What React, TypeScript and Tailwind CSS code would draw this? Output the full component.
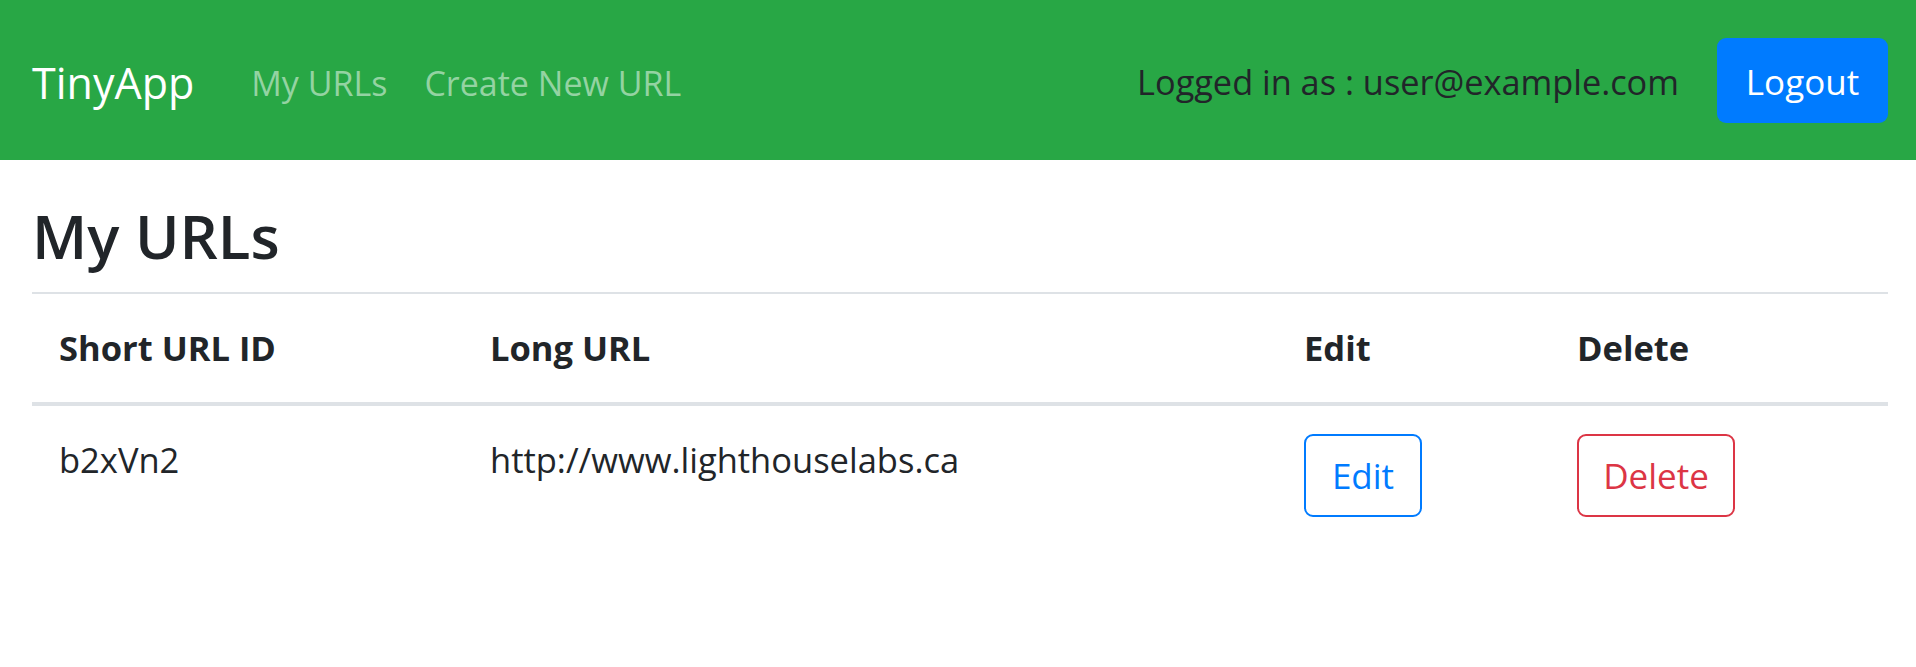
export default function App() {
  return (
    <div className="min-h-[667px] bg-white font-['Open_Sans',sans-serif] text-[#212529]">
      <nav className="flex h-[160px] items-center bg-[#28a745] pl-[32px] pr-[28px]">
        <span className="whitespace-nowrap pt-[4px] text-[43px] leading-none text-white">TinyApp</span>
        <div className="ml-[57px] flex gap-[37px] whitespace-nowrap pt-[5px] text-[34px] leading-none text-[#94d3a2]">
          <span>My URLs</span>
          <span>Create New URL</span>
        </div>
        <div className="ml-auto flex items-center gap-[38px]">
          <span className="whitespace-nowrap pt-[5px] text-[34.3px] leading-none text-[#212529]">Logged in as : user@example.com</span>
          <button className="flex h-[85px] w-[171px] items-center justify-center rounded-[9px] bg-[#007bff] pt-[3px] text-[35px] leading-none text-white">
            Logout
          </button>
        </div>
      </nav>
      <main className="pl-[32px] pr-[28px] pt-[38px]">
        <h1 className="mb-[17px] text-[60px] font-semibold leading-[77px]">My URLs</h1>
        <div className="grid grid-cols-[431px_814px_273px_338px] border-t-2 border-[#dee2e6] text-[34.5px] leading-[54px]">
          <div className="border-b-4 border-[#dee2e6] p-[27px] font-bold">Short URL ID</div>
          <div className="border-b-4 border-[#dee2e6] p-[27px] font-bold">Long URL</div>
          <div className="border-b-4 border-[#dee2e6] p-[27px] font-bold">Edit</div>
          <div className="border-b-4 border-[#dee2e6] p-[27px] font-bold">Delete</div>
          <div className="p-[27px]">b2xVn2</div>
          <div className="p-[27px]">http://www.lighthouselabs.ca</div>
          <div className="p-[27px]">
            <button className="mt-px flex h-[83px] w-[118px] items-center justify-center rounded-[9px] border-2 border-[#007bff] text-[35px] leading-none text-[#007bff]">
              Edit
            </button>
          </div>
          <div className="p-[27px]">
            <button className="mt-px flex h-[83px] w-[158px] items-center justify-center rounded-[9px] border-2 border-[#dc3545] text-[35px] leading-none text-[#dc3545]">
              Delete
            </button>
          </div>
        </div>
      </main>
    </div>
  );
}
